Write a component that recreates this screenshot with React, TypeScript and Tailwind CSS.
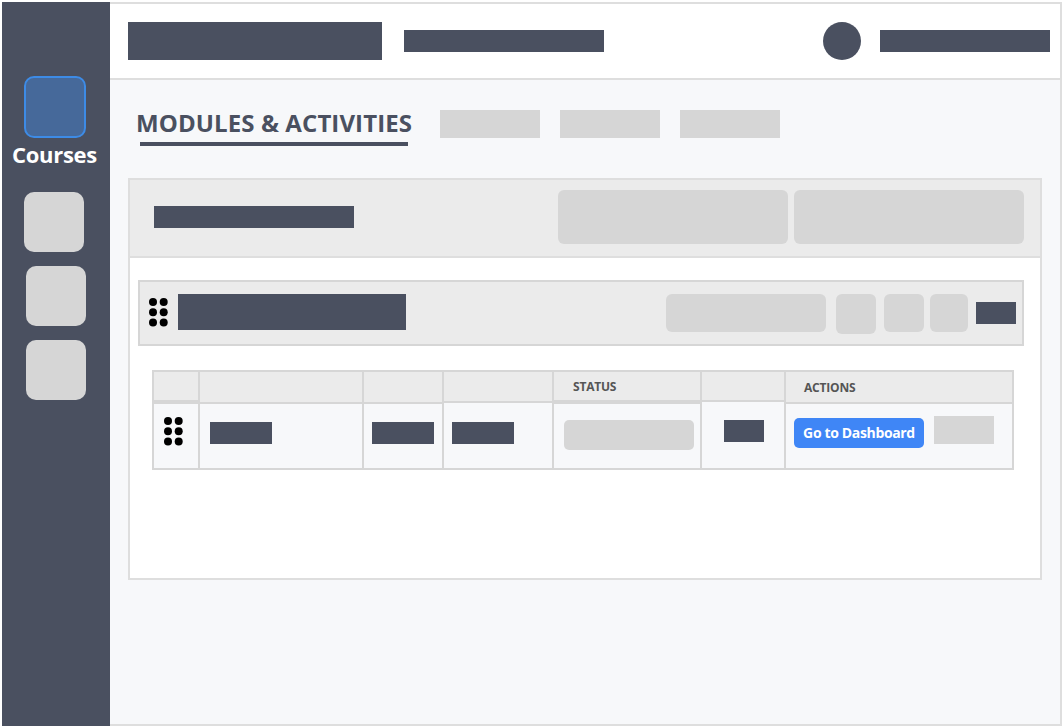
const font = { fontFamily: '"Open Sans", "Liberation Sans", sans-serif' };

function Grip() {
  const xs = [4, 14.7];
  const ys = [4, 14.2, 24.4];
  return (
    <svg width="19" height="29" viewBox="0 0 19 29" className="block shrink-0">
      {ys.map(y => xs.map(x => <circle key={`${x}-${y}`} cx={x} cy={y} r="4" fill="#000" />))}
    </svg>
  );
}

function HeaderCell({ head, rule, label, labelClass = '' }: { head: string; rule: string; label?: string; labelClass?: string }) {
  return (
    <div className="flex flex-col shrink-0">
      <div className={`${head} bg-[#ebebeb] flex items-center`}>
        {label && <span className={`text-[12px] leading-none font-bold text-[#555] tracking-[-0.2px] ${labelClass}`}>{label}</span>}
      </div>
      <div className={`${rule} bg-[#d6d6d6]`}></div>
    </div>
  );
}

const Bar = ({ className }: { className: string }) => <div className={`bg-[#4a5060] ${className}`}></div>;
const Block = ({ className }: { className: string }) => <div className={`bg-[#d6d6d6] ${className}`}></div>;

export default function App() {
  return (
    <div className="w-[1064px] h-[728px] bg-white p-[2px] flex overflow-hidden" style={font}>
      {/* Sidebar */}
      <aside className="w-[108px] h-[724px] bg-[#4a5060] flex flex-col shrink-0">
        <div className="mt-[74px] ml-[22px] w-[62px] h-[62px] rounded-[10px] border-2 border-[#3d8be6] bg-[#46699a]"></div>
        <div className="mt-[2px] h-[30px] ml-[10px] text-[22px] leading-[28px] font-bold text-white tracking-[-0.3px]">Courses</div>
        <Block className="mt-[22px] ml-[22px] w-[60px] h-[60px] rounded-[10px]" />
        <Block className="mt-[14px] ml-[24px] w-[60px] h-[60px] rounded-[10px]" />
        <Block className="mt-[14px] ml-[24px] w-[60px] h-[60px] rounded-[10px]" />
      </aside>

      <div className="w-[952px] h-[724px] border-t-2 border-r-2 border-b-2 border-[#dedede] bg-[#f7f8fa] flex flex-col">
        {/* Top bar */}
        <header className="h-[76px] shrink-0 bg-white border-b-2 border-[#dedede] flex items-center pl-[18px]">
          <Bar className="w-[254px] h-[38px]" />
          <Bar className="ml-[22px] w-[200px] h-[22px]" />
          <Bar className="ml-[219px] w-[38px] h-[38px] rounded-full" />
          <Bar className="ml-[19px] w-[170px] h-[22px]" />
        </header>

        <main className="pl-[18px] pt-[30px]">
          {/* Tabs */}
          <div className="flex items-start">
            <div className="w-[312px] pl-[9px]">
              <div className="h-[28px] -mt-[1px] -ml-[1px] text-[24px] leading-[28px] font-bold text-[#4a5060] whitespace-nowrap tracking-[0.1px]">MODULES &amp; ACTIVITIES</div>
              <div className="mt-[5px] ml-[3px] w-[268px] h-[4px] bg-[#4a5060]"></div>
            </div>
            <div className="flex gap-5">
              <Block className="w-[100px] h-[28px]" />
              <Block className="w-[100px] h-[28px]" />
              <Block className="w-[100px] h-[28px]" />
            </div>
          </div>

          {/* Card */}
          <section className="mt-[32px] w-[914px] h-[402px] border-2 border-[#dedede] bg-white">
            <div className="h-[78px] bg-[#ebebeb] border-b-2 border-[#dedede] flex items-start pl-[24px]">
              <Bar className="mt-[26px] w-[200px] h-[22px]" />
              <Block className="mt-[10px] ml-[204px] w-[230px] h-[54px] rounded-[6px]" />
              <Block className="mt-[10px] ml-[6px] w-[230px] h-[54px] rounded-[6px]" />
            </div>

            {/* Module row */}
            <div className="mt-[22px] ml-[8px] w-[886px] h-[66px] border-2 border-[#d6d6d6] bg-[#ebebeb] flex items-start">
              <div className="mt-[16px] ml-[9px]"><Grip /></div>
              <Bar className="mt-[12px] ml-[10px] w-[228px] h-[36px]" />
              <Block className="mt-[12px] ml-[260px] w-[160px] h-[38px] rounded-[6px]" />
              <Block className="mt-[12px] ml-[10px] w-[40px] h-[40px] rounded-[6px]" />
              <Block className="mt-[12px] ml-[8px] w-[40px] h-[38px] rounded-[6px]" />
              <Block className="mt-[12px] ml-[6px] w-[38px] h-[38px] rounded-[6px]" />
              <Bar className="mt-[20px] ml-[8px] w-[40px] h-[22px]" />
            </div>

            {/* Activities table */}
            <div className="mt-[24px] ml-[22px] w-[862px] h-[100px] border-2 border-[#d6d6d6] bg-[#f7f8fa] grid grid-cols-[46px_164px_80px_110px_148px_84px_1fr] divide-x-2 divide-[#d6d6d6]">
              <div className="flex flex-col">
                <HeaderCell head="h-[28px]" rule="h-[4px]" />
                <div className="mt-[13px] ml-[10px]"><Grip /></div>
              </div>
              <div className="flex flex-col">
                <HeaderCell head="h-[30px]" rule="h-[2px]" />
                <Bar className="mt-[18px] ml-[10px] w-[62px] h-[22px]" />
              </div>
              <div className="flex flex-col">
                <HeaderCell head="h-[30px]" rule="h-[2px]" />
                <Bar className="mt-[18px] ml-[8px] w-[62px] h-[22px]" />
              </div>
              <div className="flex flex-col">
                <HeaderCell head="h-[29px]" rule="h-[2px]" />
                <Bar className="mt-[19px] ml-[8px] w-[62px] h-[22px]" />
              </div>
              <div className="flex flex-col">
                <HeaderCell head="h-[28px]" rule="h-[4px]" label="STATUS" labelClass="ml-[19px] mt-[1px]" />
                <Block className="mt-[16px] ml-[10px] w-[130px] h-[30px] rounded-[5px]" />
              </div>
              <div className="flex flex-col">
                <HeaderCell head="h-[28px]" rule="h-[2px]" />
                <Bar className="mt-[18px] ml-[22px] w-[40px] h-[22px]" />
              </div>
              <div className="flex flex-col">
                <HeaderCell head="h-[30px]" rule="h-[2px]" label="ACTIONS" labelClass="ml-[18px] mt-[2px]" />
                <div className="flex items-start mt-[12px] ml-[8px]">
                  <button className="mt-[2px] w-[130px] h-[30px] rounded-[5px] bg-[#3f86f6] text-white text-[14px] leading-none font-bold whitespace-nowrap tracking-[-0.35px]">Go to Dashboard</button>
                  <Block className="ml-[10px] w-[60px] h-[28px]" />
                </div>
              </div>
            </div>
          </section>
        </main>
      </div>
    </div>
  );
}
